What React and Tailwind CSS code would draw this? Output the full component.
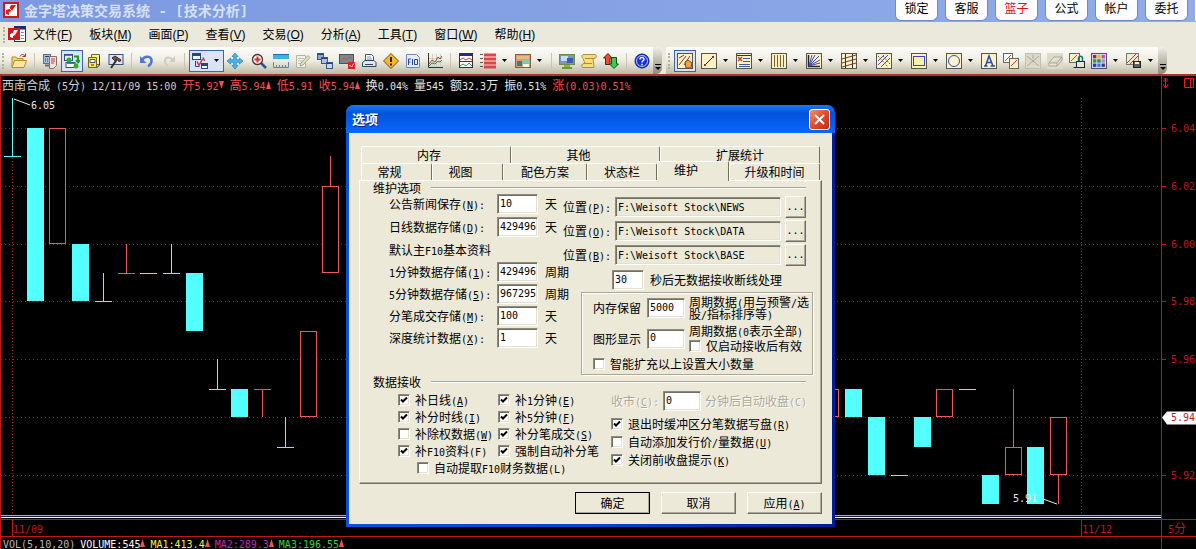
import { Fragment } from "react";

const CYAN = "#54ffff";
const RED = "#f05858";

const MONO = "font-['DejaVu_Sans_Mono','Noto_Sans_CJK_SC',monospace] text-[10px]";
const SUNKEN =
  "border border-t-[#8f8c7e] border-l-[#8f8c7e] border-r-white border-b-white shadow-[inset_1px_1px_0_#716f64,inset_-1px_-1px_0_#e3e0d0]";
const RAISED =
  "border border-t-white border-l-white border-r-[#716f64] border-b-[#716f64] shadow-[inset_-1px_-1px_0_#aca899]";

/** Underlines the character that follows "&", as in a Windows resource string. */
function Accel({ text }) {
  const at = text.indexOf("&");
  if (at < 0) return text;
  return (
    <>
      {text.slice(0, at)}
      <u className="underline-offset-1">{text[at + 1]}</u>
      {text.slice(at + 2)}
    </>
  );
}

/** Mixed text: Latin runs are half the width of a Chinese character. */
function Txt({ children, className = "" }) {
  return (
    <span className={`whitespace-pre ${className}`}>
      {children.split(/([\x20-\x7e]+)/).map((part, i) =>
        i % 2 ? (
          <span key={i} className={`leading-2 ${MONO}`}>
            <Accel text={part} />
          </span>
        ) : (
          <Fragment key={i}>{part}</Fragment>
        ),
      )}
    </span>
  );
}

/* ---------- icons ---------- */

function Svg({ children, size = 16 }) {
  return (
    <svg viewBox="0 0 16 16" width={size} height={size} fill="none" className="shrink-0" aria-hidden="true">
      {children}
    </svg>
  );
}

function Tile({ children, faded }) {
  return (
    <Svg>
      <rect x="0.5" y="0.5" width="15" height="15" fill={faded ? "#dcd9c8" : "#fdf2c4"} stroke={faded ? "#c2bfae" : "#55554c"} />
      {children}
    </Svg>
  );
}

const ICONS = {
  open: (
    <Svg>
      <path d="M1 14V4h4l1 1.500h6V8" fill="#f6d67a" stroke="#b58a2c" />
      <path d="M1 14.500 3.500 7.500H15.500L13 14.500Z" fill="#fdeaa0" stroke="#b58a2c" />
      <path d="M9 3.500C10 1 13 1 14 3M14.500 0.500V3.500H11.500" stroke="#b03030" />
    </Svg>
  ),
  calc: (
    <Svg>
      <rect x="1.500" y="1.500" width="7" height="9" fill="#a9bede" stroke="#5a6c90" />
      <path d="M3 3.500h4M3 6h1m1 0h1m1 0h1M3 8h1m1 0h1" stroke="#2c3c66" />
      <path d="M7.500 3.500h7v9l-3 3h-4z" fill="#f4dede" stroke="#8d6a6a" />
      <path d="M9 6h4M9 8h4M9 10h3" stroke="#c04040" />
      <path d="M3 12.500h4" stroke="#6b6b6b" strokeWidth="2" />
    </Svg>
  ),
  layout: (
    <Svg>
      <rect x="0.500" y="1.500" width="8" height="6" fill="#dff0ff" stroke="#34508c" />
      <rect x="2" y="9.500" width="9" height="5" fill="#fff" stroke="#34508c" />
      <path d="M1 2.500h7M3 10.500h8" stroke="#4a78d0" />
      <path d="M10 3.500h4v5M12 7l2 2.500L16 7" stroke="#18a018" strokeWidth="2" />
      <circle cx="5" cy="7" r="2.500" fill="#28b028" />
      <circle cx="12" cy="13" r="2.500" fill="#28b028" />
    </Svg>
  ),
  cabinet: (
    <Svg>
      <path d="M5.500 1.500h8v10h-8z" fill="#fff48a" stroke="#666640" />
      <path d="M2.500 4.500h8v10h-8z" fill="#ffe840" stroke="#666640" />
      <path d="M4 6.500h5v3H4z" fill="#fff" stroke="#555" />
      <path d="M5 12h3M13.500 3v9l-3 3" stroke="#333" />
    </Svg>
  ),
  hammer: (
    <Svg>
      <rect x="1" y="1.500" width="14" height="10" fill="#d9e6f5" stroke="#3e4f78" />
      <path d="M4 5l3-2 6 4-1.500 2L9 6.500 6.500 7.500Z" fill="#7a5050" stroke="#402020" />
      <path d="M8.500 7 3 15" stroke="#303030" strokeWidth="2" />
    </Svg>
  ),
  undo: (
    <Svg>
      <path d="M3 7c3-5 10-4 9.500 1.500-.3 2.500-2 4-3.500 5" stroke="#4c78d4" strokeWidth="2.500" />
      <path d="M1 3v7h6.500Z" fill="#4c78d4" />
    </Svg>
  ),
  redo: (
    <Svg>
      <path d="M12 7C9 3 4 4 4 8c0 2 1 3.500 3 5" stroke="#cfcdc2" strokeWidth="2" />
      <path d="M14 3v6H8Z" fill="#cfcdc2" />
    </Svg>
  ),
  swap: (
    <Svg>
      <rect x="0.500" y="0.500" width="8" height="6" fill="#fff" stroke="#24468c" />
      <path d="M1 2h7" stroke="#24468c" strokeWidth="2" />
      <rect x="9.500" y="10.500" width="6" height="5" fill="#fff" stroke="#24468c" />
      <path d="M10 12h6" stroke="#24468c" strokeWidth="2" />
      <path d="M11 4.500 12.500 8M5 8.500l2 4M7 12.500 10.500 6" stroke="#c03060" strokeWidth="1.500" />
      <path d="M3.500 8v5.500h4" stroke="#24468c" />
    </Svg>
  ),
  move: (
    <Svg>
      <path d="M8 0l3 3.500H9.300v3.200h3.200V5L16 8l-3.500 3V9.300H9.300v3.200H11L8 16l-3-3.500h1.700V9.300H3.500V11L0 8l3.500-3v1.700h3.200V3.500H5Z" fill="#4cb4ec" stroke="#2080c0" strokeWidth="0.700" />
    </Svg>
  ),
  zoom: (
    <Svg>
      <path d="M10 10l5 5" stroke="#30509c" strokeWidth="2.500" />
      <circle cx="6.500" cy="6.500" r="5" fill="#fff6f0" stroke="#4a3038" strokeWidth="1.300" />
      <path d="M6.500 3.500v6M3.500 6.500h6" stroke="#d03030" strokeWidth="2" />
    </Svg>
  ),
  ruler: (
    <Svg>
      <rect x="0" y="1" width="16" height="5" fill="#3cb4dc" />
      <path d="M0 1.500h16" stroke="#2070a8" />
      <path d="M0.500 9v5.500h15V9M3.500 12v2M6.500 12v2M9.500 12v2M12.500 12v2" stroke="#5a86b4" />
    </Svg>
  ),
  pad: (
    <Svg>
      <path d="M1.500 2.500h9v12h-9z" fill="#f3f2ea" stroke="#b4b2a2" />
      <path d="M3 5.500h6M3 8h5M3 10.500h4" stroke="#c2c0b2" />
      <path d="M13 2.500 15 4.500 8 12l-3 1 1-3Z" fill="#e2dfc8" stroke="#a8a690" />
    </Svg>
  ),
  windows: (
    <Svg>
      <rect x="0.500" y="0.500" width="6" height="6" fill="#8cacdc" stroke="#3a5488" />
      <rect x="4.500" y="4.500" width="6" height="6" fill="#a8c4ec" stroke="#3a5488" />
      <rect x="9.500" y="9.500" width="6" height="6" fill="#c0d8f8" stroke="#3a5488" />
      <path d="M1 1.500h5M5 5.500h5M10 10.500h5" stroke="#24407c" />
    </Svg>
  ),
  monitor: (
    <Svg>
      <rect x="0.500" y="1.500" width="14" height="9" fill="#80848c" stroke="#4c5058" />
      <path d="M2 8l3-3 2 2 3-3 3 1" stroke="#f04040" />
      <rect x="9" y="9" width="7" height="7" fill="#e02020" />
      <path d="M10.500 12l2 2 2.500-3.500" stroke="#fff" />
    </Svg>
  ),
  print: (
    <Svg>
      <path d="M4.500 8V1.500h6l2 2V8" fill="#fff" stroke="#44506c" />
      <path d="M6 4h4M6 6h5" stroke="#8090b0" />
      <path d="M1.500 13.500V9.500L4 7.500h9l2 2v4Z" fill="#dfe6f2" stroke="#34405c" />
      <path d="M4 11.500h8" stroke="#34405c" />
    </Svg>
  ),
  warn: (
    <Svg>
      <path d="M8 0.500 15.500 8 8 15.500 0.500 8Z" fill="#f8b820" stroke="#6a4c10" />
      <path d="M8 4v5M8 10.500v2" stroke="#301c00" strokeWidth="2" />
    </Svg>
  ),
  f10: (
    <Svg>
      <path d="M1.500 1.500h10l3 3v10h-13z" fill="#e4ecfa" stroke="#7088b8" />
      <path d="M3.500 12V6h2.500M3.500 9h2M7.500 6v6M9.500 6.500h3v5h-3z" stroke="#28488c" />
    </Svg>
  ),
  graph: (
    <Svg>
      <path d="M5.500 1v13M9.500 1v13M13.500 1v13M2 5.500h13M2 9.500h13" stroke="#c8d4c8" />
      <path d="M1.500 0v14.500H16" stroke="#333" />
      <path d="M2 11l3-4 3 2 3-5 2 2 2-3" stroke="#d03838" />
      <path d="M2 13l3-3 3 1 3-3 2 1 2-2" stroke="#2c9850" />
    </Svg>
  ),
  panes: (
    <Svg>
      <rect x="1.500" y="0.500" width="13" height="14" fill="#fff" stroke="#333" />
      <path d="M2 2h12" stroke="#1c2c9c" strokeWidth="2" />
      <path d="M2 8.500h12" stroke="#333" />
      <path d="M2 7l3-2 3 2 3-2 3 2" stroke="#d03838" />
      <path d="M2 13l3-2 3 2 3-3 3 3" stroke="#2c9850" />
    </Svg>
  ),
  list: (
    <Svg>
      <path d="M4 2h12M4 6h12M4 10h12M4 14h12" stroke="#e04444" strokeWidth="3" />
      <path d="M0 1.500h3M0 5.500h3M0 9.500h3M0 13.500h3" stroke="#555" />
    </Svg>
  ),
  blocks: (
    <Svg>
      <rect x="0.500" y="1.500" width="15" height="13" fill="#d8a070" stroke="#8c5c3c" />
      <rect x="2" y="3" width="12" height="3" fill="#e8b888" />
      <rect x="2" y="8" width="5" height="5" fill="#208888" />
      <rect x="8" y="7" width="6" height="3" fill="#70d0c8" />
      <rect x="8" y="11" width="6" height="3" fill="#f4f4e8" />
    </Svg>
  ),
  computer: (
    <Svg>
      <rect x="0.500" y="1.500" width="15" height="10" fill="#7894cc" stroke="#6c8c48" />
      <path d="M2 3h7v5H2z" fill="#c8dcf8" />
      <path d="M8 5h6v5H8z" fill="#3c58b0" />
      <path d="M5 12h6v2.500H5z" fill="#88b838" />
      <path d="M3 15h10" stroke="#6c9c30" strokeWidth="2" />
    </Svg>
  ),
  scroll: (
    <Svg>
      <path d="M3 1.500h11c2 0 2 4-1 4h-1l1 9H2c-2 0-2-4 1-4h1l-2-5C0 4 1 1.500 3 1.500Z" fill="#f4dc80" stroke="#b09030" />
      <path d="M4 5.500h8M4 10.500h7" stroke="#b09030" />
    </Svg>
  ),
  updown: (
    <Svg>
      <path d="M5 0.500 9 5H7v6.500H2.500V5H0.500Z" fill="#e85030" stroke="#5c1c10" />
      <path d="M11 15.500 15.500 11H13.500V4.500H8.500V11H6.500Z" fill="#40c850" stroke="#10501c" />
    </Svg>
  ),
  help: (
    <Svg>
      <circle cx="8" cy="8" r="7" fill="#1430e0" stroke="#0c1c90" />
      <circle cx="8" cy="8" r="5.500" stroke="#e8ecff" strokeWidth="0.800" />
      <path d="M6 6.500C6 4 10 4 10 6.300 10 7.800 8 7.800 8 9.500M8 10.800v1.500" stroke="#fff" strokeWidth="1.500" />
    </Svg>
  ),
  draw: (
    <Tile>
      <path d="M2 12 9 3M2 5l5-3M7 12l6-9" stroke="#8c3c30" />
      <path d="M8 9l3-2 4 3-1 5H9Z" fill="#f0a050" stroke="#7c4818" />
    </Tile>
  ),
  line: (
    <Tile>
      <path d="M3 13 13 3" stroke="#302820" />
      <rect x="3" y="11" width="2" height="2" fill="#c02020" />
      <rect x="11" y="3" width="2" height="2" fill="#c02020" />
    </Tile>
  ),
  levels: (
    <Tile>
      <path d="M1 2.500h14" stroke="#334" />
      <path d="M7 5.500h7M7 8.500h7M3 11.500h11M3 13.500h11" stroke="#4458b0" />
      <path d="M2 4l4 4M6 4 2 8" stroke="#d03030" strokeWidth="1.300" />
    </Tile>
  ),
  bars: (
    <Tile>
      <path d="M3.500 2v12M6.500 2v12M9.500 2v12M12.500 2v12" stroke="#8c5c28" />
    </Tile>
  ),
  fan: (
    <Tile>
      <path d="M2.500 2v11.500H14" stroke="#222" strokeWidth="1.500" />
      <path d="M3 13 6 2M3 13l6-11M3 13 13 3M3 13l11-6M3 13l11-3" stroke="#3c4cb0" />
    </Tile>
  ),
  channel: (
    <Tile>
      <path d="M4.500 1v14M11.500 1v14" stroke="#333" />
      <path d="M1 6l14-4M1 10l14-4M1 14l14-4" stroke="#7c3838" />
    </Tile>
  ),
  fork: (
    <Tile>
      <path d="M2 8 8 2M2 12 12 2M5 14l9-9" stroke="#4458b0" />
      <path d="M2 3l10 11M7 3l7 8" stroke="#666" strokeDasharray="2 1" />
    </Tile>
  ),
  rect: (
    <Tile>
      <rect x="2.500" y="3.500" width="11" height="9" fill="#f8f0b0" stroke="#3848b8" />
    </Tile>
  ),
  circle: (
    <Tile>
      <circle cx="8" cy="8" r="5.500" fill="#fbf4cc" stroke="#3848b8" />
    </Tile>
  ),
  text: (
    <Tile>
      <path d="M3 13h3.500M9.500 13H14M4.500 13 8 3l4 10M6 9.500h4.500" stroke="#2848b8" strokeWidth="1.500" />
    </Tile>
  ),
  copy: (
    <Svg>
      <rect x="0.500" y="0.500" width="9" height="9" fill="#fff" stroke="#666" />
      <path d="M2 8l6-6" stroke="#c84040" />
      <rect x="6.500" y="5.500" width="9" height="10" fill="#fdf2c4" stroke="#666" />
      <path d="M8 13l6-6" stroke="#c84040" />
    </Svg>
  ),
  cut: (
    <Tile faded>
      <path d="M2 3l12 10M14 3 2 13M8 2v4" stroke="#a8a694" />
    </Tile>
  ),
  eraser: (
    <Svg>
      <rect x="0" y="0" width="16" height="16" fill="#dddaca" />
      <path d="M2 10 7 4h8l-5 6ZM2 10v3h8l5-6V4M10 10v3" fill="#e8e6da" stroke="#a8a694" />
    </Svg>
  ),
  lock: (
    <Svg>
      <rect x="0.500" y="0.500" width="10" height="9" fill="#fdf2c4" stroke="#666" />
      <path d="M2 8l6-6" stroke="#c84040" />
      <path d="M9.500 8V5.500c0-3 4-3 4 0V8" stroke="#207060" strokeWidth="1.500" />
      <rect x="7.500" y="8.500" width="8" height="6" fill="#e4e8d0" stroke="#224" />
      <path d="M4.500 14.500h3" stroke="#224" />
    </Svg>
  ),
  palette: (
    <Svg>
      <rect x="0.500" y="0.500" width="15" height="15" fill="#d8d8e4" stroke="#505068" />
      {["#c02020", "#e0c020", "#d040d0", "#20a040", "#208080", "#a0a0a0", "#2040c0", "#3080e0", "#603080"].map((c, i) => (
        <rect key={c} x={2 + (i % 3) * 4.300} y={2 + Math.floor(i / 3) * 4.300} width="3.300" height="3.300" fill={c} />
      ))}
    </Svg>
  ),
  save: (
    <Svg>
      <rect x="0.500" y="0.500" width="12" height="11" fill="#f8e8d0" stroke="#777" />
      <path d="M1 10 10 1M4 11l8-8" stroke="#b03838" />
      <rect x="7.500" y="8.500" width="7" height="6" fill="#606060" stroke="#222" />
      <rect x="9" y="9" width="4" height="2" fill="#fdf2c4" />
    </Svg>
  ),
};

/* "|" is a separator, "." a thin gap, "*" marks a pressed tool, a trailing "v" adds a drop-down arrow */
const MAIN_TOOLS = [
  "open", "|", "calc", "layout*", "cabinet", "hammer", "|", "undo", "redo", "|", "swap*v", "move", ".",
  "zoom", "ruler", "pad", "windows", "monitor", "print", "warn", "f10", "graph", "|", "panes", "list.v",
  "blocks.v", "|", "computer", "scroll", "updown", "|", "help",
];
const DRAW_TOOLS = [
  "draw*", ".", "line.v", "levels.v", "bars.v", "fan.v", "channel.v", "fork.v", "rect.v", "circle.v",
  "text", "copy", "cut", "eraser", "lock", "palette.v", "save.v",
];

function Tool({ code }) {
  if (code === "|") return <span className="mx-1 h-4 w-px shrink-0 bg-[#c8c4b0]" />;
  if (code === ".") return <span className="w-0.5 shrink-0" />;
  const [name] = code.split(/[*.]/);
  const pressed = code.includes("*");
  const drop = code.endsWith("v");
  return (
    <button
      type="button"
      aria-label={name}
      className={`flex h-[22px] shrink-0 items-center ${drop ? "w-[35px] gap-1.5 pl-[3px]" : "w-[22px] justify-center"} ${
        pressed ? "bg-[#dbe4f6] outline -outline-offset-1 outline-[#3f62b0]" : ""
      }`}
    >
      {ICONS[name]}
      {drop && (
        <svg width="5" height="3" className="shrink-0" aria-hidden="true">
          <path d="M0 0h5L2.500 3Z" fill="#000" />
        </svg>
      )}
    </button>
  );
}

function ToolStrip({ tools, label }) {
  return (
    <div
      role="toolbar"
      aria-label={label}
      className="flex h-[27px] shrink-0 items-center rounded-r-md bg-linear-to-b from-[#fdfdfa] via-[#efede2] to-[#bdb9a4] pl-0.5"
    >
      <span className="mr-1 h-4 w-0.5 shrink-0 border-l-2 border-dotted border-[#b4b09c]" />
      {tools.map((code, i) => (
        <Tool key={i} code={code} />
      ))}
      <span className="flex h-full w-[9px] items-end justify-center rounded-r-md bg-linear-to-b from-[#efeee6] to-[#8f8b78] pb-1">
        <svg width="6" height="6" aria-hidden="true">
          <path d="M0 0.500h6" stroke="#000" />
          <path d="M0 3h6L3 6Z" fill="#000" />
        </svg>
      </span>
    </div>
  );
}

function AppLogo({ size }) {
  return (
    <Svg size={size}>
      <rect width="16" height="16" fill="#d01818" />
      <rect x="2" y="2" width="12" height="12" fill="#fff" />
      <path d="M3 12V8l3-1 2-4h5L9 9l-3 1v3Z" fill="#d82020" />
      <path d="M4 4l8 8" stroke="#fff" />
    </Svg>
  );
}

/* ---------- window frame ---------- */

const QUICK = ["锁定", "客服", "篮子", "公式", "帐户", "委托"];
const MENUS = [
  ["文件", "F"], ["板块", "M"], ["画面", "P"], ["查看", "V"], ["交易", "O"],
  ["分析", "A"], ["工具", "T"], ["窗口", "W"], ["帮助", "H"],
];

function TitleBar() {
  return (
    <header className="flex h-[22px] items-start justify-between bg-linear-to-r from-[#7b98e2] to-[#91ace8]">
      <div className="flex h-5 items-center gap-[5px] pl-[3px]">
        <AppLogo size={16} />
        <h1 className="text-sm leading-5 font-bold whitespace-pre text-[#d6e0fa]">
          金字塔决策交易系统<span className="font-['DejaVu_Sans_Mono',monospace]"> - [</span>技术分析
          <span className="font-['DejaVu_Sans_Mono',monospace]">]</span>
        </h1>
      </div>
      <div className="flex h-[21px] gap-[7px]">
        {QUICK.map((name) => (
          <button
            key={name}
            type="button"
            className={`h-[21px] w-[43px] rounded-b-md border border-t-0 border-[#6f8ac8] bg-[#fdfdff] pb-1 text-xs leading-4 ${
              name === "篮子" ? "text-[#e01010]" : "text-black"
            }`}
          >
            {name}
          </button>
        ))}
        <span className="w-px bg-white" />
      </div>
    </header>
  );
}

function MenuBar() {
  return (
    <nav className="flex h-[25px] items-center bg-[#ebe9db] pl-[3px]">
      <span className="mr-[3px] h-4 w-0.5 border-l-2 border-dotted border-[#b4b09c]" />
      <svg width="18" height="17" aria-hidden="true">
        <rect x="6.500" y="0.500" width="11" height="15" fill="#fff" stroke="#1c2c7c" />
        <path d="M7 2h10" stroke="#1c2c7c" strokeWidth="3" />
        <rect y="2" width="12" height="12" fill="#d01818" />
        <path d="M2 11V8l3-1 1-3h4L7 9l-2 1v2Z" fill="#fff" />
        <path d="M13 6.500h3M13 9.500h3M13 12.500h3" stroke="#88a" />
      </svg>
      <ul className="ml-[7px] flex gap-[17px]">
        {MENUS.map(([name, key]) => (
          <li key={key}>
            <button type="button" className="block font-['Liberation_Sans','Noto_Sans_CJK_SC',sans-serif] text-xs leading-5">
              {name}(<u>{key}</u>)
            </button>
          </li>
        ))}
      </ul>
    </nav>
  );
}

/* ---------- chart ---------- */

// [kind, left, body top, body bottom, high, low]
const CANDLES = [
  ["down", 4, 156, 156, 98, 156],
  ["down", 27, 128, 301],
  ["up", 49, 128, 244],
  ["down", 72, 244, 301],
  ["down", 95, 301, 301, 273, 301],
  ["up", 118, 273, 273, 244, 273],
  ["down", 140, 273, 273],
  ["down", 163, 273, 273, 244, 273],
  ["down", 186, 273, 331],
  ["down", 209, 389, 389, 359, 389],
  ["down", 231, 389, 417],
  ["up", 254, 389, 389, 389, 417],
  ["down", 277, 447, 447, 417, 447],
  ["up", 300, 331, 417],
  ["up", 322, 186, 273, 156, 186],
  ["up", 822, 389, 417],
  ["down", 845, 389, 417],
  ["down", 868, 417, 475],
  ["down", 891, 475, 475],
  ["down", 914, 417, 447],
  ["up", 936, 389, 417],
  ["down", 959, 389, 389],
  ["down", 982, 475, 504],
  ["up", 1005, 447, 475, 389, 447],
  ["down", 1027, 447, 504],
  ["up", 1050, 417, 475, 475, 504],
];

const PRICES = [
  [128, "6.04"], [186, "6.02"], [244, "6.00"], [301, "5.98"], [359, "5.96"], [417, "5.94"], [475, "5.92"],
];

function Candle({ kind, x, top, bottom, high, low }) {
  const color = kind === "up" ? RED : CYAN;
  return (
    <g stroke={color}>
      {high !== undefined && <path d={`M${x + 8.5} ${high}V${low}`} />}
      {top === bottom ? (
        <path d={`M${x} ${top + 0.5}h17`} />
      ) : (
        <rect x={x + 0.5} y={top + 0.5} width="16" height={bottom - top - 1} fill={kind === "up" ? "#000" : CYAN} />
      )}
    </g>
  );
}

function PriceChart() {
  return (
    <svg className="min-h-[422px] w-full flex-1" role="img" aria-label="K线">
      <g transform="translate(-1 -93)" shapeRendering="crispEdges" fill="none">
        <g stroke="#a02020" strokeDasharray="1 3">
          {PRICES.map(([y]) => (
            <path key={y} d={`M1 ${y + 0.5}H4000`} />
          ))}
          <path d="M12.500 98V515M1081.500 98V515" strokeDasharray="1 2" />
        </g>
        {CANDLES.map(([kind, x, top, bottom, high, low]) => (
          <Candle key={x} kind={kind} x={x} top={top} bottom={bottom} high={high} low={low} />
        ))}
      </g>
      <g transform="translate(-1 -93)" stroke="#e8e8e8">
        <path d="M14 99 30 105M1043 499l14 5" />
        <g className={MONO} stroke="none" fill="#e8e8e8">
          <text x="31" y="109">6.05</text>
          <text x="1013" y="502">5.91</text>
        </g>
      </g>
    </svg>
  );
}

function PriceAxis() {
  return (
    <svg className="min-h-[443px] w-[35px] shrink-0 self-stretch border-l border-[#c01818]" role="img" aria-label="价格">
      <g transform="translate(-1162 -76)">
        <path d="M1165.500 78v9M1163 81h5M1163 84l2.500 4 3-4M1164 79h4" stroke="#f01818" fill="none" />
        <path d="M1184.500 78.500h9v9h-9zM1190.500 78v9" stroke="#f01818" fill="none" />
        <path d="M1162 417.500l5-6h29v13h-29Z" fill="#fff" />
        {PRICES.map(([y, label]) => (
          <Fragment key={y}>
            {y !== 417 && <path d={`M1162 ${y + 0.5}h4`} stroke="#c01818" />}
            <text x="1171" y={y + 4} className={MONO} fill="#c01818">
              {label}
            </text>
          </Fragment>
        ))}
      </g>
    </svg>
  );
}

function Trend({ down }) {
  return (
    <svg width="5" height="8" className="inline-block" aria-hidden="true">
      <path d={down ? "M0 0h5L2.500 8Z" : "M0 8h5L2.500 0Z"} fill="#f05050" />
    </svg>
  );
}

const QUOTES = [
  ["西南合成", "text-[#d0d0d0]"],
  ["(5分)", "text-[#d0d0d0]"],
  ["12/11/09 15:00", "text-[#d0d0d0]"],
  ["开5.92", "text-[#f05050]", "down"],
  ["高5.94", "text-[#f05050]", "up"],
  ["低5.91", "text-[#f05050]"],
  ["收5.94", "text-[#f05050]", "up"],
  ["换0.04%", "text-[#e4e4e4]"],
  ["量545", "text-[#e4e4e4]"],
  ["额32.3万", "text-[#e4e4e4]"],
  ["振0.51%", "text-[#e4e4e4]"],
  ["涨(0.03)0.51%", "text-[#f05050]"],
];

const VOLUMES = [
  ["VOLUME:545", "text-white"],
  ["MA1:413.4", "text-[#f4f430]"],
  ["MA2:289.3", "text-[#c428c4]"],
  ["MA3:196.55", "text-[#30d830]"],
];

function ChartArea() {
  return (
    <main className="flex flex-1 flex-col border-t-2 border-l border-t-[#b03030] border-l-[#c01818] bg-black text-xs leading-3">
      <div className="flex flex-1">
        <div className="flex min-w-0 flex-1 flex-col">
          <div className="flex h-[17px] items-center gap-1.5 pl-px">
            {QUOTES.map(([text, color, trend]) => (
              <span key={text} className={`flex items-center ${color}`}>
                <Txt>{text}</Txt>
                {trend && <Trend down={trend === "down"} />}
              </span>
            ))}
          </div>
          <PriceChart />
          <div className="mb-px h-[3px] border-y border-t-[#a8a8b8] border-b-white bg-[#181850]" />
        </div>
        <PriceAxis />
      </div>
      <div className="flex h-[18px] border-y border-[#c01818] text-[#c01818]">
        <div className="flex flex-1 justify-between pl-[11px]">
          <span className="border-l border-[#c01818] py-0.5">
            <Txt>11/09</Txt>
          </span>
          <span className="w-20 border-l border-[#c01818] py-0.5">
            <Txt>11/12</Txt>
          </span>
        </div>
        <div className="w-[35px] border-l border-[#c01818] py-0.5 pl-1.5">
          <Txt>5分</Txt>
        </div>
      </div>
      <div className="flex h-3 justify-between">
        <div className="flex items-center gap-[5px] pl-0.5">
          <Txt className="text-[#b8b8b8]">VOL(5,10,20)</Txt>
          {VOLUMES.map(([text, color]) => (
            <span key={text} className={`flex items-center ${color}`}>
              <Txt>{text}</Txt>
              <Trend />
            </span>
          ))}
        </div>
        <div className="w-[35px] border-l border-[#c01818]" />
      </div>
    </main>
  );
}

/* ---------- options dialog ---------- */

const TABS_BACK = [
  { name: "内存", size: "w-[150px] pr-3.5" },
  { name: "其他", size: "w-[149px] pr-3.5" },
  { name: "扩展统计", size: "flex-1" },
];
const TABS_FRONT = [
  { name: "常规", size: "w-[71px] pr-3.5" },
  { name: "视图", size: "w-[71px] pr-3.5" },
  { name: "配色方案", size: "w-[84px]" },
  { name: "状态栏", size: "w-[70px]" },
  { name: "维护", size: "w-[72px] pr-3.5", active: true },
  { name: "升级和时间", size: "flex-1" },
];

function Tab({ name, size, active }) {
  return (
    <button
      type="button"
      role="tab"
      aria-selected={!!active}
      className={`rounded-t-xs border-t border-r border-l border-t-white border-r-[#716f64] border-l-white bg-[#ece9d8] text-xs leading-3 ${size} ${
        active ? "relative -mt-0.5 -mb-px pb-1" : ""
      }`}
    >
      {name}
    </button>
  );
}

function SectionTitle({ children }) {
  return (
    <h3 className="mr-[7px] flex h-[13px] items-center gap-2.5 leading-3">
      {children}
      <span className="h-0.5 flex-1 border-t border-b border-t-[#aca899] border-b-white" />
    </h3>
  );
}

function Field({ id, value, size, ...rest }) {
  return (
    <input
      id={id}
      defaultValue={value}
      className={`h-5 shrink-0 bg-white pb-0.5 pl-0.5 leading-3 ${MONO} ${SUNKEN} ${size}`}
      {...rest}
    />
  );
}

function Check({ children, checked }) {
  return (
    <label className="flex items-center gap-[5px] leading-3">
      <span className="grid size-3 shrink-0 place-items-center">
        <input
          type="checkbox"
          defaultChecked={checked}
          className={`peer size-3 appearance-none bg-white [grid-area:1/1] ${SUNKEN}`}
        />
        <svg viewBox="0 0 8 8" className="invisible z-10 size-2 peer-checked:visible [grid-area:1/1]" aria-hidden="true">
          <path d="M1 3.500 3 5.500 7 1.500" stroke="#000" strokeWidth="2" fill="none" />
        </svg>
      </span>
      <Txt>{children}</Txt>
    </label>
  );
}

function StoreRow({ id, label, value, unit }) {
  return (
    <div className="flex h-5 items-center">
      <label htmlFor={id} className="w-[108px] shrink-0">
        <Txt>{label}</Txt>
      </label>
      {value && <Field id={id} value={value} size="w-[41px]" />}
      {unit && <span className="ml-[7px] shrink-0">{unit}</span>}
    </div>
  );
}

function PathRow({ id, label, value }) {
  return (
    <div className="mr-[7px] flex h-[22px] items-center">
      <label htmlFor={id} className="w-[52px]">
        <Txt>{label}</Txt>
      </label>
      <input id={id} readOnly value={value} className={`h-5 min-w-0 flex-1 px-0.5 leading-3 ${MONO} ${SUNKEN}`} />
      <button type="button" aria-label="浏览" className={`ml-1 h-[22px] w-[21px] bg-[#ece9d8] leading-3 ${MONO} ${RAISED}`}>
        ...
      </button>
    </div>
  );
}

function Maintenance() {
  return (
    <div className="border border-t-white border-r-[#716f64] border-b-[#716f64] border-l-white bg-[#ece9d8] pr-2 pb-[7px] pl-[13px] shadow-[inset_-1px_-1px_0_#aca899]">
      <SectionTitle>维护选项</SectionTitle>
      <div className="flex">
        <div className="w-[190px] shrink-0 pl-4">
          <div className="space-y-[3px]">
            <StoreRow id="news" label="公告新闻保存(&N):" value="10" unit="天" />
            <StoreRow id="day" label="日线数据存储(&D):" value="429496" unit="天" />
            <StoreRow id="base" label="默认主F10基本资料" />
          </div>
          <div className="mt-0.5 space-y-0.5">
            <StoreRow id="min1" label="1分钟数据存储(&1):" value="429496" unit="周期" />
            <StoreRow id="min5" label="5分钟数据存储(&5):" value="967295" unit="周期" />
            <StoreRow id="tick" label="分笔成交存储(&M):" value="100" unit="天" />
            <StoreRow id="depth" label="深度统计数据(&X):" value="1" unit="天" />
          </div>
        </div>
        <div className="flex-1 pt-0.5">
          <div className="space-y-0.5">
            <PathRow id="pathNews" label="位置(&P):" value="F:\Weisoft Stock\NEWS" />
            <PathRow id="pathData" label="位置(&O):" value="F:\Weisoft Stock\DATA" />
            <PathRow id="pathBase" label="位置(&B):" value="F:\Weisoft Stock\BASE" />
          </div>
          <div className="mt-1 ml-[49px] flex items-center gap-1.5">
            <Field id="timeout" value="30" size="w-8" />
            <label htmlFor="timeout">秒后无数据接收断线处理</label>
          </div>
          <div className="mt-0.5 ml-[18px] border border-[#aca899] pt-[3px] pb-1 pl-[11px] shadow-[1px_1px_0_#fff,inset_1px_1px_0_#fff]">
            <div className="flex items-center">
              <label htmlFor="keep" className="w-[54px]">内存保留</label>
              <Field id="keep" value="5000" size="w-[38px]" />
              <div className="ml-1 flex flex-col">
                <Txt className="h-3">周期数据(用与预警/选</Txt>
                <Txt className="h-3">股/指标排序等)</Txt>
              </div>
            </div>
            <div className="mt-[5px] flex items-center">
              <label htmlFor="show" className="w-[54px]">图形显示</label>
              <Field id="show" value="0" size="w-[38px]" />
              <div className="ml-1 flex flex-col gap-[3px]">
                <Txt className="h-3">周期数据(0表示全部)</Txt>
                <Check>仅启动接收后有效</Check>
              </div>
            </div>
            <div className="mt-1.5">
              <Check>智能扩充以上设置大小数量</Check>
            </div>
          </div>
        </div>
      </div>
      <SectionTitle>数据接收</SectionTitle>
      <div className="mt-[3px] flex justify-between">
        <div className="pl-[25px]">
          <div className="grid auto-rows-[17px] grid-cols-[100px_auto] items-center">
            <Check checked>补日线(&A)</Check>
            <Check checked>补1分钟(&E)</Check>
            <Check checked>补分时线(&I)</Check>
            <Check checked>补5分钟(&F)</Check>
            <Check>补除权数据(&W)</Check>
            <Check checked>补分笔成交(&S)</Check>
            <Check checked>补F10资料(F)</Check>
            <Check checked>强制自动补分笔</Check>
          </div>
          <div className="flex h-[17px] items-center pl-[19px]">
            <Check>自动提取F10财务数据(L)</Check>
          </div>
        </div>
        <div className="w-[202px]">
          <div className="flex items-center text-[#aca899] [text-shadow:1px_1px_0_#fff]">
            <label htmlFor="close" className="w-[52px]">
              <Txt>收市(&C):</Txt>
            </label>
            <Field id="close" value="0" size="w-[38px] text-black" />
            <Txt className="ml-1">分钟后自动收盘(C)</Txt>
          </div>
          <div className="mt-1 grid auto-rows-[18px] items-center">
            <Check checked>退出时缓冲区分笔数据写盘(&R)</Check>
            <Check>自动添加发行价/量数据(&U)</Check>
            <Check checked>关闭前收盘提示(&K)</Check>
          </div>
        </div>
      </div>
    </div>
  );
}

function OptionsDialog() {
  return (
    <section
      role="dialog"
      aria-labelledby="dialog-title"
      className="absolute top-[105px] left-[346px] w-[489px] rounded-t-lg bg-linear-to-r from-[#0a4fe4] via-[#0844d8] to-[#001c98] px-[3px] pb-[3px] text-xs leading-3 text-black"
    >
      <div className="-mx-[3px] flex h-7 items-center justify-between rounded-t-lg bg-linear-to-b from-[#1c78f8] via-[#0352dc] via-30% to-[#0668fc] pr-[5px] pl-1.5">
        <h2 id="dialog-title" className="text-[13px] font-bold text-white [text-shadow:1px_1px_0_#0a2a80]">
          选项
        </h2>
        <button
          type="button"
          aria-label="关闭"
          className="grid size-[21px] place-items-center rounded-[3px] border border-white bg-linear-to-br from-[#f0906c] via-[#dc4c2c] to-[#b83010]"
        >
          <svg width="11" height="11" aria-hidden="true">
            <path d="M1 1l9 9M10 1l-9 9" stroke="#fff" strokeWidth="2" />
          </svg>
        </button>
      </div>
      <div className="bg-[#ece9d8] px-2.5 pt-[13px] pb-2.5">
        <div role="tablist" className="px-0.5">
          <div className="flex h-[17px]">
            {TABS_BACK.map((tab) => (
              <Tab key={tab.name} {...tab} />
            ))}
          </div>
          <div className="flex h-[17px]">
            {TABS_FRONT.map((tab) => (
              <Tab key={tab.name} {...tab} />
            ))}
          </div>
        </div>
        <Maintenance />
        <div className="mt-2 flex justify-end gap-[11px]">
          <button type="button" className={`h-[22px] w-[75px] bg-[#ece9d8] outline -outline-offset-1 outline-black ${RAISED}`}>
            确定
          </button>
          <button type="button" className={`h-[22px] w-[75px] bg-[#ece9d8] ${RAISED}`}>
            取消
          </button>
          <button type="button" className={`h-[22px] w-[75px] bg-[#ece9d8] ${RAISED}`}>
            <Txt>应用(&A)</Txt>
          </button>
        </div>
      </div>
    </section>
  );
}

export default function App() {
  return (
    <div className="relative flex min-h-screen flex-col overflow-hidden font-['Noto_Sans_CJK_SC',sans-serif] text-black">
      <TitleBar />
      <MenuBar />
      <div className="flex gap-1 overflow-hidden bg-[#ebe9db]">
        <ToolStrip tools={MAIN_TOOLS} label="常用" />
        <ToolStrip tools={DRAW_TOOLS} label="画线" />
      </div>
      <ChartArea />
      <OptionsDialog />
    </div>
  );
}
